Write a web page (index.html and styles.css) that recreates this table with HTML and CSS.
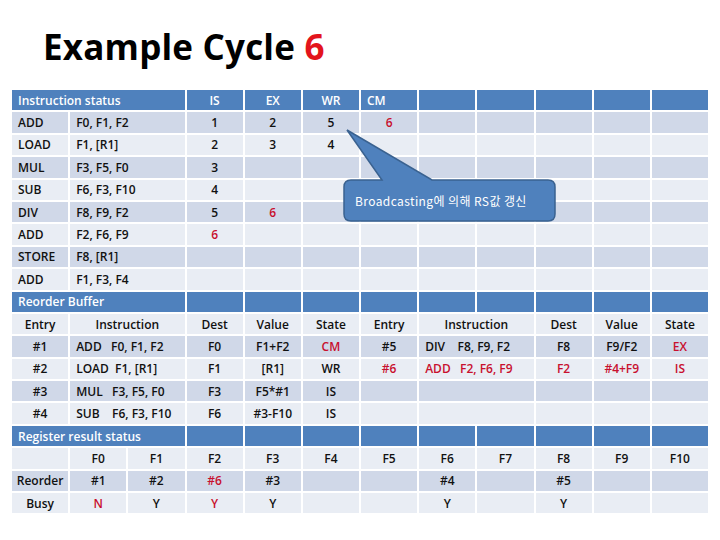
FILE: index.html
```html
<!DOCTYPE html>
<html>
<head>
<meta charset="utf-8">
<link rel="stylesheet" href="styles.css">
</head>
<body>
<div class="page">
  <h1 class="title">Example Cycle <span class="red6">6</span></h1>
  <div class="grid">
    <div class="row h">
      <div class="s3 left">Instruction status</div><div>IS</div><div>EX</div><div>WR</div><div class="left">CM</div><div></div><div></div><div></div><div></div><div></div>
    </div>
    <div class="row d">
      <div class="left">ADD</div><div class="s2 left">F0, F1, F2</div><div>1</div><div>2</div><div>5</div><div class="r">6</div><div></div><div></div><div></div><div></div><div></div>
    </div>
    <div class="row l">
      <div class="left">LOAD</div><div class="s2 left">F1, [R1]</div><div>2</div><div>3</div><div>4</div><div></div><div></div><div></div><div></div><div></div><div></div>
    </div>
    <div class="row d">
      <div class="left">MUL</div><div class="s2 left">F3, F5, F0</div><div>3</div><div></div><div></div><div></div><div></div><div></div><div></div><div></div><div></div>
    </div>
    <div class="row l">
      <div class="left">SUB</div><div class="s2 left">F6, F3, F10</div><div>4</div><div></div><div></div><div></div><div></div><div></div><div></div><div></div><div></div>
    </div>
    <div class="row d">
      <div class="left">DIV</div><div class="s2 left">F8, F9, F2</div><div>5</div><div class="r">6</div><div></div><div></div><div></div><div></div><div></div><div></div><div></div>
    </div>
    <div class="row l">
      <div class="left">ADD</div><div class="s2 left">F2, F6, F9</div><div class="r">6</div><div></div><div></div><div></div><div></div><div></div><div></div><div></div><div></div>
    </div>
    <div class="row d">
      <div class="left">STORE</div><div class="s2 left">F8, [R1]</div><div></div><div></div><div></div><div></div><div></div><div></div><div></div><div></div><div></div>
    </div>
    <div class="row l">
      <div class="left">ADD</div><div class="s2 left">F1, F3, F4</div><div></div><div></div><div></div><div></div><div></div><div></div><div></div><div></div><div></div>
    </div>

    <div class="row h">
      <div class="s3 left">Reorder Buffer</div><div></div><div></div><div></div><div></div><div></div><div></div><div></div><div></div><div></div>
    </div>
    <div class="row l">
      <div>Entry</div><div class="s2">Instruction</div><div>Dest</div><div>Value</div><div>State</div><div>Entry</div><div class="s2">Instruction</div><div>Dest</div><div>Value</div><div>State</div>
    </div>
    <div class="row d">
      <div>#1</div><div class="s2 left pre">ADD   F0, F1, F2</div><div>F0</div><div>F1+F2</div><div class="r">CM</div><div>#5</div><div class="s2 left pre">DIV    F8, F9, F2</div><div>F8</div><div>F9/F2</div><div class="r">EX</div>
    </div>
    <div class="row l">
      <div>#2</div><div class="s2 left pre">LOAD  F1, [R1]</div><div>F1</div><div>[R1]</div><div>WR</div><div class="r">#6</div><div class="s2 left pre r">ADD   F2, F6, F9</div><div class="r">F2</div><div class="r">#4+F9</div><div class="r">IS</div>
    </div>
    <div class="row d">
      <div>#3</div><div class="s2 left pre">MUL   F3, F5, F0</div><div>F3</div><div>F5*#1</div><div>IS</div><div></div><div class="s2"></div><div></div><div></div><div></div>
    </div>
    <div class="row l">
      <div>#4</div><div class="s2 left pre">SUB    F6, F3, F10</div><div>F6</div><div>#3-F10</div><div>IS</div><div></div><div class="s2"></div><div></div><div></div><div></div>
    </div>

    <div class="row h">
      <div class="s3 left">Register result status</div><div></div><div></div><div></div><div></div><div></div><div></div><div></div><div></div><div></div>
    </div>
    <div class="row l">
      <div></div><div>F0</div><div>F1</div><div>F2</div><div>F3</div><div>F4</div><div>F5</div><div>F6</div><div>F7</div><div>F8</div><div>F9</div><div>F10</div>
    </div>
    <div class="row d">
      <div>Reorder</div><div>#1</div><div>#2</div><div class="r">#6</div><div>#3</div><div></div><div></div><div>#4</div><div></div><div>#5</div><div></div><div></div>
    </div>
    <div class="row l">
      <div>Busy</div><div class="r">N</div><div>Y</div><div class="r">Y</div><div>Y</div><div></div><div></div><div>Y</div><div></div><div>Y</div><div></div><div></div>
    </div>
  </div>

  <div class="callout">
    <svg class="callout-shape" width="720" height="540" viewBox="0 0 720 540">
      <path d="M351,180 L382,180 L347,130 L432,180 L548,180 Q555,180 555,187 L555,214 Q555,221 548,221 L351,221 Q344,221 344,214 L344,187 Q344,180 351,180 Z" fill="#4F81BD" stroke="#3A6290" stroke-width="1.5"/>
    </svg>
    <span class="callout-text">Broadcasting에 의해 RS값 갱신</span>
  </div>
</div>
</body>
</html>
```
FILE: styles.css
```css
html, body {
  margin: 0;
  padding: 0;
  background: #ffffff;
}
.page {
  position: relative;
  width: 720px;
  height: 540px;
  overflow: hidden;
  font-family: "Open Sans", "Noto Sans CJK KR", sans-serif;
}
.title {
  margin: 0;
  padding: 25px 0 0 43px;
  height: 66px;
  box-sizing: border-box;
  font-size: 35px;
  line-height: 44px;
  font-weight: 700;
  color: #000;
  letter-spacing: 0.2px;
}
.red6 {
  color: #e3141c;
}
.grid {
  margin-left: 12px;
  margin-top: 24px;
  width: 696px;
  display: grid;
  grid-template-columns: repeat(12, 1fr);
  grid-auto-rows: 20.4px;
  gap: 2px;
  font-size: 12px;
  font-weight: 600;
  color: #111;
}
.row {
  display: contents;
}
.row > div {
  display: flex;
  align-items: center;
  justify-content: center;
  white-space: nowrap;
  overflow: hidden;
}
.row.h > div {
  background: #4f81bd;
  color: #ffffff;
  font-weight: 600;
}
.row.d > div {
  background: #d0d8e8;
}
.row.l > div {
  background: #e9edf4;
}
.row > div.left {
  justify-content: flex-start;
  padding-left: 6px;
}
.row > div.s2 {
  grid-column: span 2;
}
.row > div.s3 {
  grid-column: span 3;
}
.row > div.pre {
  white-space: pre;
}
.row > div.r {
  color: #c8102e;
}
.callout {
  position: absolute;
  left: 0;
  top: 0;
  width: 720px;
  height: 540px;
  pointer-events: none;
}
.callout-shape {
  position: absolute;
  left: 0;
  top: 0;
}
.callout-text {
  position: absolute;
  left: 355px;
  top: 193px;
  font-family: "Noto Sans CJK KR", sans-serif;
  font-size: 12px;
  line-height: 16px;
  letter-spacing: 0.4px;
  color: #ffffff;
  font-weight: 400;
}
```
